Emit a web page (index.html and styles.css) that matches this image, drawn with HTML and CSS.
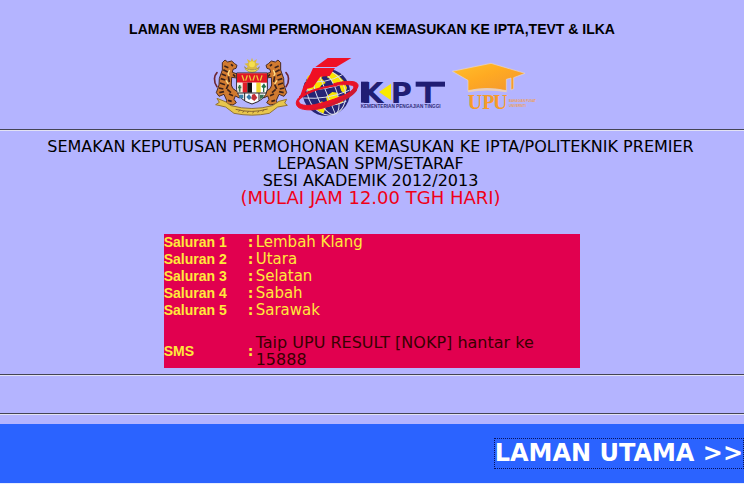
FILE: index.html
```html
<!DOCTYPE html>
<html lang="ms">
<head>
<meta charset="utf-8">
<meta name="viewport" content="width=device-width, initial-scale=1">
<title>Semakan Keputusan UPU</title>
<link rel="stylesheet" href="styles.css">
</head>
<body>
<header class="banner">
  <h1 class="site-title">LAMAN WEB RASMI PERMOHONAN KEMASUKAN KE IPTA,TEVT &amp; ILKA</h1>
  <div class="logos">
    <svg class="logo" width="84" height="63" viewBox="6 15 252 189" role="img" aria-label="Jata Negara">
      <defs>
        <g id="tiger">
          <path d="M36 110C24 94 28 76 36 68" fill="none" stroke="#6c2635" stroke-width="5" stroke-linecap="round"/>
          <path d="M52 38L60 30L68 36L80 33L89 41L96 46L93 55L84 58L82 67L101 73L105 82L95 84L80 82L79 105L83 115L99 127L109 137L103 144L91 138L87 148L94 158L84 165L62 161L65 151L57 133L42 139L34 128L42 105L43 85L52 60Z" fill="#d07a30" stroke="#4a2a22" stroke-width="3"/>
          <path d="M58 48L70 53M55 59L68 66M50 72L63 77M47 86L61 90M45 99L60 104M42 114L55 117M43 128L57 125M70 79L73 96M70 104L64 117M67 118L78 128M72 132L84 137M69 151L80 154M78 43L84 48M84 73L91 80" fill="none" stroke="#3c211a" stroke-width="5"/>
          <path d="M74 60L69 72L73 78M63 91L70 102" fill="none" stroke="#ffe38c" stroke-width="4"/>
        </g>
      </defs>
      <path d="M141 23L145 34L156 27L152 39L164 41L154 49L161 59L148 57L141 66L134 57L121 59L128 49L118 41L130 39L126 27L137 34Z" fill="#d9b943"/>
      <circle cx="141" cy="43" r="9" fill="#f5df4b"/>
      <path d="M119 50C122 72 160 72 163 50C157 63 125 63 119 50Z" fill="#f7e759" stroke="#8b7841" stroke-width="2"/>
      <use href="#tiger"/>
      <use href="#tiger" transform="translate(279 0) scale(-1 1)"/>
      <path d="M95 69H187V119Q182 150 141 162Q100 150 95 119Z" fill="#fff" stroke="#292027" stroke-width="3"/>
      <path d="M96 70H186V98H96Z" fill="#e31624"/>
      <path d="M111 76L117 92M127 76L122 92M133 76L138 92M149 76L144 92M155 76L160 92M171 76L166 92" stroke="#eccb3d" stroke-width="4"/>
      <path d="M96 98H112V129H98Z" fill="#f5eee0"/>
      <path d="M113 98H127V128H113Z" fill="#df1f28"/>
      <path d="M127 98H141V128H127Z" fill="#111"/>
      <path d="M141 98H154V128H141Z" fill="#fff"/>
      <path d="M154 98H167V128H154Z" fill="#f0d82b"/>
      <path d="M104 105V125M99 112H109" stroke="#35784b" stroke-width="5"/>
      <path d="M177 100L184 111L178 114V126H174V114L169 110Z" fill="#24714a"/>
      <path d="M98 129H184M119 129V152M162 129V152" stroke="#252027" stroke-width="3"/>
      <path d="M103 134H115V145H103Z" fill="#397da6"/>
      <path d="M124 141L132 132L140 143L132 150Z" fill="#367aaa"/>
      <path d="M141 134L149 131L157 143L148 153L139 146Z" fill="#c23038"/>
      <path d="M165 134H177L173 144L165 147Z" fill="#377251"/>
      <path d="M36 145L61 155L78 167Q141 184 202 167L222 154L245 148L239 159L247 166L218 171L193 190Q141 201 87 190L62 171L32 164L43 157Z" fill="#e8c64d" stroke="#937434" stroke-width="3"/>
      <path d="M92 178Q141 191 188 177M101 185L105 179M113 188L117 182M127 189L131 183M143 190L147 183M158 188L162 182M173 185L177 178" fill="none" stroke="#8b672e" stroke-width="3"/>
    </svg>
    <svg class="logo" width="152" height="63" viewBox="12 15 456 189" role="img" aria-label="Kementerian Pengajian Tinggi">
      <circle cx="106" cy="127" r="71" fill="#262575"/>
      <path d="M50 79L72 65L99 72L91 84L104 99L91 106L83 118L66 116L57 128L42 112Z" fill="#f9e500"/>
      <path d="M116 61L142 76L159 94L168 113L162 132L151 123L145 105L127 103L119 88L108 82Z" fill="#f9e500"/>
      <path d="M105 140L124 126L139 128L141 140L163 137L154 159L136 164L125 158L108 154Z" fill="#f9e500"/>
      <path d="M75 165L93 154L106 169L97 191L79 181Z" fill="#f9e500"/>
      <g fill="none" stroke="#d9dbed" stroke-width="3">
        <ellipse cx="106" cy="127" rx="30" ry="70" transform="rotate(-22 106 127)"/>
        <ellipse cx="106" cy="127" rx="56" ry="70" transform="rotate(-22 106 127)"/>
        <path d="M79 62L133 192M43 94Q104 103 154 74M34 120Q105 122 170 97M38 144Q107 150 175 121M51 169Q110 175 166 154"/>
      </g>
      <path d="M110 24H181L136 51H73Z" fill="#ef1024"/>
      <path d="M66 54H132L116 78L88 80L66 112L49 116L36 139H27L39 105L57 74Z" fill="#ef1024"/>
      <path d="M128 101C179 88 210 94 199 114C181 149 88 188 38 178C7 173 11 147 35 135C10 157 27 172 70 164C119 154 194 127 188 110C184 101 153 104 128 106Z" fill="#e91227" stroke="#e91227" stroke-width="3"/>
      <path d="M24 139C54 119 94 108 139 103L138 109C91 115 50 128 24 151Z" fill="#e91227"/>
      <path d="M191 111C177 140 105 171 53 178C111 177 185 147 199 119Z" fill="#ce1830"/>
      <g class="kpt-name" fill="#201d73">
        <text x="210" y="158">K</text>
        <text x="299" y="158">P</text>
        <text x="381" y="158">T</text>
      </g>
      <path d="M210 95H232V158H210Z" fill="#201d73"/>
      <path d="M374 95H462V110H374Z" fill="#201d73"/>
      <path d="M264 126L300 101V151Z" fill="#fae900"/>
      <text class="kpt-caption" x="209" y="173" fill="#302d7b">KEMENTERIAN PENGAJIAN TINGGI</text>
    </svg>
    <svg class="logo" width="86" height="63" viewBox="30 15 258 189" role="img" aria-label="UPU">
      <defs>
        <linearGradient id="gold" x1="0" y1="0" x2="1" y2="1">
          <stop offset="0" stop-color="#ffc02b"/>
          <stop offset=".45" stop-color="#ffaa22"/>
          <stop offset="1" stop-color="#f19531"/>
        </linearGradient>
      </defs>
      <path d="M34 64L150 40L252 70L218 83V116L210 120V84L196 88V122Q138 109 81 122V91Z" fill="url(#gold)" stroke="#ead8c9" stroke-width="2"/>
      <path d="M81 122Q138 109 197 122V127Q138 116 81 127Z" fill="#e9cdbb"/>
      <g class="upu-name" fill="#f69b29">
        <text x="80" y="178">U</text>
        <text x="124" y="178">P</text>
        <text x="156" y="178">U</text>
      </g>
      <g class="upu-caption" fill="#eea057">
        <text x="204" y="156">BAHAGIAN PUSAT</text>
        <text x="204" y="172">UNIVERSITI</text>
      </g>
    </svg>
  </div>
</header>
<hr class="rule">
<main>
  <h2 class="notice">
    SEMAKAN KEPUTUSAN PERMOHONAN KEMASUKAN KE IPTA/POLITEKNIK PREMIER<br>
    LEPASAN SPM/SETARAF<br>
    SESI AKADEMIK 2012/2013
    <span class="start-time">(MULAI JAM 12.00 TGH HARI)</span>
  </h2>
  <table class="channels">
    <tbody>
      <tr><th scope="row">Saluran 1</th><td class="colon">:</td><td><a href="#">Lembah Klang</a></td></tr>
      <tr><th scope="row">Saluran 2</th><td class="colon">:</td><td><a href="#">Utara</a></td></tr>
      <tr><th scope="row">Saluran 3</th><td class="colon">:</td><td><a href="#">Selatan</a></td></tr>
      <tr><th scope="row">Saluran 4</th><td class="colon">:</td><td><a href="#">Sabah</a></td></tr>
      <tr><th scope="row">Saluran 5</th><td class="colon">:</td><td><a href="#">Sarawak</a></td></tr>
      <tr class="sms"><th scope="row">SMS</th><td class="colon">:</td><td class="instruction">Taip UPU RESULT [NOKP] hantar ke 15888</td></tr>
    </tbody>
  </table>
</main>
<hr class="rule">
<div class="spacer"></div>
<hr class="rule">
<footer class="footer"><a class="home" href="#">LAMAN UTAMA &gt;&gt;</a></footer>
</body>
</html>
```
FILE: styles.css
```css
* { box-sizing: border-box; }
html { background: #e8edff; }
body {
  margin: 0;
  background: #b4b4ff;
  color: #000;
  font: 15px/17px Verdana, "DejaVu Sans", sans-serif;
}
.banner { padding-top: 20px; }
.site-title {
  margin: 0;
  font: bold 14px/18px Arial, "Liberation Sans", sans-serif;
  text-align: center;
}
.logos {
  display: flex;
  justify-content: center;
  gap: 4px;
  margin: 17px 0 11px;
}
.logo { display: block; flex: none; }
.kpt-name { font: bold 87px "DejaVu Sans", sans-serif; }
.kpt-caption { font: bold 14px "Liberation Sans", sans-serif; }
.upu-name { font: bold 60px "Liberation Serif", serif; }
.upu-caption { font: bold 9px "Liberation Sans", sans-serif; }
.rule {
  height: 2px;
  margin: 0;
  border: 0;
  border-top: 1px solid #444455;
  border-bottom: 1px solid #e2e2f4;
}
.notice {
  margin: 0;
  padding: 7px 3px 0 0;
  font-size: 16px;
  font-weight: normal;
  text-align: center;
}
.start-time {
  display: block;
  color: #f00018;
  font-size: 18px;
}
.channels {
  width: 56%;
  margin: 28px auto 6px 22%;
  border-collapse: collapse;
  background: #e1004f;
  color: #390000;
}
.channels th, .channels td {
  padding: 0;
  text-align: left;
  vertical-align: middle;
}
.channels th {
  width: 84px;
  color: #ffe93b;
  font: bold 14px/17px Arial, "Liberation Sans", sans-serif;
}
.channels .colon {
  width: 8px;
  color: #ffe93b;
  font-size: 14px;
  font-weight: bold;
}
.channels a { color: #ffe93b; text-decoration: none; }
.channels .sms > * { padding-top: 15px; }
.channels .instruction { font-size: 16px; }
.spacer { height: 37px; }
.footer {
  margin-top: 9px;
  padding: 14px 0;
  background: #2b63ff;
  text-align: right;
}
.home {
  display: inline-block;
  border: 1px dotted #08135d;
  color: #fff;
  font-size: 24px;
  font-weight: bold;
  line-height: 29px;
  text-decoration: none;
}
```
